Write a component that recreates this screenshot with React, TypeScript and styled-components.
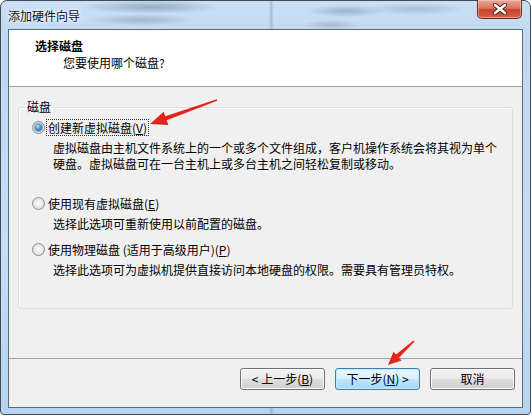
import React from 'react'
import styled, {createGlobalStyle} from 'styled-components'

const GlobalStyle = createGlobalStyle`
  html, body {
    margin: 0;
    padding: 0;
    background: #ffffff;
  }
  body {
    font-family: "Noto Sans CJK SC", "Noto Sans", sans-serif;
    font-size: 12px;
    color: #000;
  }
`

const Page = styled.div`
  position: relative;
  width: 532px;
  height: 416px;
  overflow: hidden;
`

const Window = styled.div`
  width: 531px;
  height: 415px;
  box-sizing: border-box;
  border: 1px solid #414c59;
  border-radius: 7px 7px 4px 4px;
  padding: 0 7px 6px 7px;
  display: flex;
  flex-direction: column;
  background:
    radial-gradient(70px 7px at 150px 6px, rgba(90, 110, 135, 0.45), transparent),
    radial-gradient(55px 6px at 140px 19px, rgba(90, 110, 135, 0.35), transparent),
    radial-gradient(40px 6px at 345px 10px, rgba(90, 110, 135, 0.4), transparent),
    radial-gradient(50px 6px at 415px 8px, rgba(90, 110, 135, 0.3), transparent),
    radial-gradient(30px 5px at 330px 24px, rgba(90, 110, 135, 0.3), transparent),
    linear-gradient(90deg, transparent 268px, rgba(110, 130, 155, 0.35) 270px, transparent 273px),
    linear-gradient(180deg, #cadff4 0%, #bfd8f1 10%, #c6ddf4 60%, #b7d3f0 100%);
`

const TitleBar = styled.div`
  position: relative;
  height: 28px;
  display: flex;
  align-items: center;
`

const Title = styled.span`
  font-size: 12px;
  color: #111;
  text-shadow: 0 0 6px #ffffff, 0 0 3px #ffffff;
`

const CloseButton = styled.div`
  position: absolute;
  top: -1px;
  right: 1px;
  width: 45px;
  height: 19px;
  box-sizing: border-box;
  border: 1px solid #6f2c20;
  border-top: none;
  border-radius: 0 0 5px 5px;
  background: linear-gradient(180deg, #e9a898 0%, #dc7560 45%, #c8432a 55%, #d2634a 100%);
  box-shadow: inset 0 0 0 1px rgba(255, 220, 210, 0.45);
  display: flex;
  align-items: center;
  justify-content: center;
`

const Client = styled.div`
  flex: 1;
  display: flex;
  flex-direction: column;
  border: 1px solid #5c6b7c;
  background: #f0f0f0;
`

const Header = styled.div`
  height: 57px;
  box-sizing: border-box;
  background: #ffffff;
  border-bottom: 1px solid #a0a0a0;
  padding: 8px 0 0 26px;
  line-height: 16px;
`

const HeaderTitle = styled.div`
  font-weight: bold;
`

const HeaderSub = styled.div`
  margin-top: 1px;
  padding-left: 28px;
`

const Body = styled.div`
  flex: 1;
  padding: 12px 9px 0 9px;
`

const Group = styled.fieldset`
  margin: 0;
  height: 210px;
  box-sizing: border-box;
  border: 1px solid #d5dfe5;
  border-radius: 3px;
  box-shadow: inset 1px 1px 0 #ffffff;
  padding: 4px 6px 0 6px;
`

const Legend = styled.legend`
  padding: 0 2px;
  line-height: 16px;
`

const Option = styled.div<{top: number}>`
  margin-top: ${p => p.top}px;
`

const OptionRow = styled.div`
  display: flex;
  align-items: center;
  height: 16px;
  padding-left: 7px;
`

const Radio = styled.span<{checked?: boolean}>`
  width: 13px;
  height: 13px;
  box-sizing: border-box;
  border-radius: 50%;
  border: 1px solid #8a8d91;
  background: radial-gradient(circle at 50% 50%, #fbfbfb 0%, #e6e7e8 55%, #d0d2d4 100%);
  margin-right: 2px;
  display: flex;
  align-items: center;
  justify-content: center;

  &::after {
    content: '';
    display: ${p => (p.checked ? 'block' : 'none')};
    width: 7px;
    height: 7px;
    border-radius: 50%;
    background: radial-gradient(circle at 40% 35%, #b8e2ff 0%, #3f94dc 45%, #1b5c9e 100%);
    box-shadow: 0 0 0 1px rgba(40, 90, 140, 0.5);
  }
`

const Label = styled.span<{focused?: boolean}>`
  padding: 0 1px;
  line-height: 15px;
  outline: ${p => (p.focused ? '1px dotted #333' : 'none')};
`

const Desc = styled.div`
  margin: 5px 0 0 28px;
  line-height: 16px;
`

const Footer = styled.div`
  height: 39px;
  border-top: 1px solid #a0a0a0;
  display: flex;
  justify-content: flex-end;
  gap: 10px;
  padding: 9px 7px 0 0;
`

const Button = styled.div<{primary?: boolean}>`
  width: 85px;
  height: 22px;
  box-sizing: border-box;
  border-radius: 3px;
  border: 1px solid ${p => (p.primary ? '#3c7fb1' : '#707070')};
  background: ${p =>
    p.primary
      ? 'linear-gradient(180deg, #eaf6fd 0%, #d9f0fc 48%, #bee6fd 52%, #a7d9f5 100%)'
      : 'linear-gradient(180deg, #f2f2f2 0%, #ebebeb 48%, #dddddd 52%, #cfcfcf 100%)'};
  box-shadow: inset 0 0 0 1px ${p => (p.primary ? '#c5e8fa' : '#fcfcfc')};
  display: flex;
  align-items: center;
  justify-content: center;
  line-height: 16px;
`

const Key = styled.span`
  text-decoration: underline;
`

const Overlay = styled.svg`
  position: absolute;
  left: 0;
  top: 0;
  pointer-events: none;
`

function arrowPoints(x1: number, y1: number, x2: number, y2: number, headLen: number, headW: number) {
  const dx = x2 - x1
  const dy = y2 - y1
  const len = Math.hypot(dx, dy)
  const ux = dx / len
  const uy = dy / len
  const nx = -uy
  const ny = ux
  const bx = x2 - ux * headLen
  const by = y2 - uy * headLen
  const pts = [
    [x1 + nx * 0.7, y1 + ny * 0.7],
    [bx + nx * 2.2, by + ny * 2.2],
    [bx + nx * headW, by + ny * headW],
    [x2, y2],
    [bx - nx * headW, by - ny * headW],
    [bx - nx * 2.2, by - ny * 2.2],
    [x1 - nx * 0.7, y1 - ny * 0.7],
  ]
  return pts.map(p => p.map(v => v.toFixed(1)).join(',')).join(' ')
}

const App: React.FC = () => {
  return (
    <Page>
      <GlobalStyle/>
      <Window>
        <TitleBar>
          <Title>添加硬件向导</Title>
          <CloseButton>
            <svg width="16" height="12" viewBox="0 0 16 12">
              <path d="M3 2 L13 10 M13 2 L3 10" stroke="#4a2018" strokeWidth="4.4" strokeLinecap="round"/>
              <path d="M3 2 L13 10 M13 2 L3 10" stroke="#ffffff" strokeWidth="2.6" strokeLinecap="round"/>
            </svg>
          </CloseButton>
        </TitleBar>
        <Client>
          <Header>
            <HeaderTitle>选择磁盘</HeaderTitle>
            <HeaderSub>您要使用哪个磁盘?</HeaderSub>
          </Header>
          <Body>
            <Group>
              <Legend>磁盘</Legend>
              <Option top={0}>
                <OptionRow>
                  <Radio checked/>
                  <Label focused>创建新虚拟磁盘(<Key>V</Key>)</Label>
                </OptionRow>
                <Desc>
                  虚拟磁盘由主机文件系统上的一个或多个文件组成，客户机操作系统会将其视为单个<br/>
                  硬盘。虚拟磁盘可在一台主机上或多台主机之间轻松复制或移动。
                </Desc>
              </Option>
              <Option top={23}>
                <OptionRow>
                  <Radio/>
                  <Label>使用现有虚拟磁盘(<Key>E</Key>)</Label>
                </OptionRow>
                <Desc>选择此选项可重新使用以前配置的磁盘。</Desc>
              </Option>
              <Option top={9}>
                <OptionRow>
                  <Radio/>
                  <Label>使用物理磁盘 (适用于高级用户)(<Key>P</Key>)</Label>
                </OptionRow>
                <Desc>选择此选项可为虚拟机提供直接访问本地硬盘的权限。需要具有管理员特权。</Desc>
              </Option>
            </Group>
          </Body>
          <Footer>
            <Button>&lt; 上一步(<Key>B</Key>)</Button>
            <Button primary>下一步(<Key>N</Key>) &gt;</Button>
            <Button>取消</Button>
          </Footer>
        </Client>
      </Window>
      <Overlay width="532" height="416">
        <polygon points={arrowPoints(217, 100, 150, 124, 17, 7)} fill="#e5231b"/>
        <polygon points={arrowPoints(414, 341, 388, 365, 13, 6)} fill="#e5231b"/>
      </Overlay>
    </Page>
  )
}

export default App
